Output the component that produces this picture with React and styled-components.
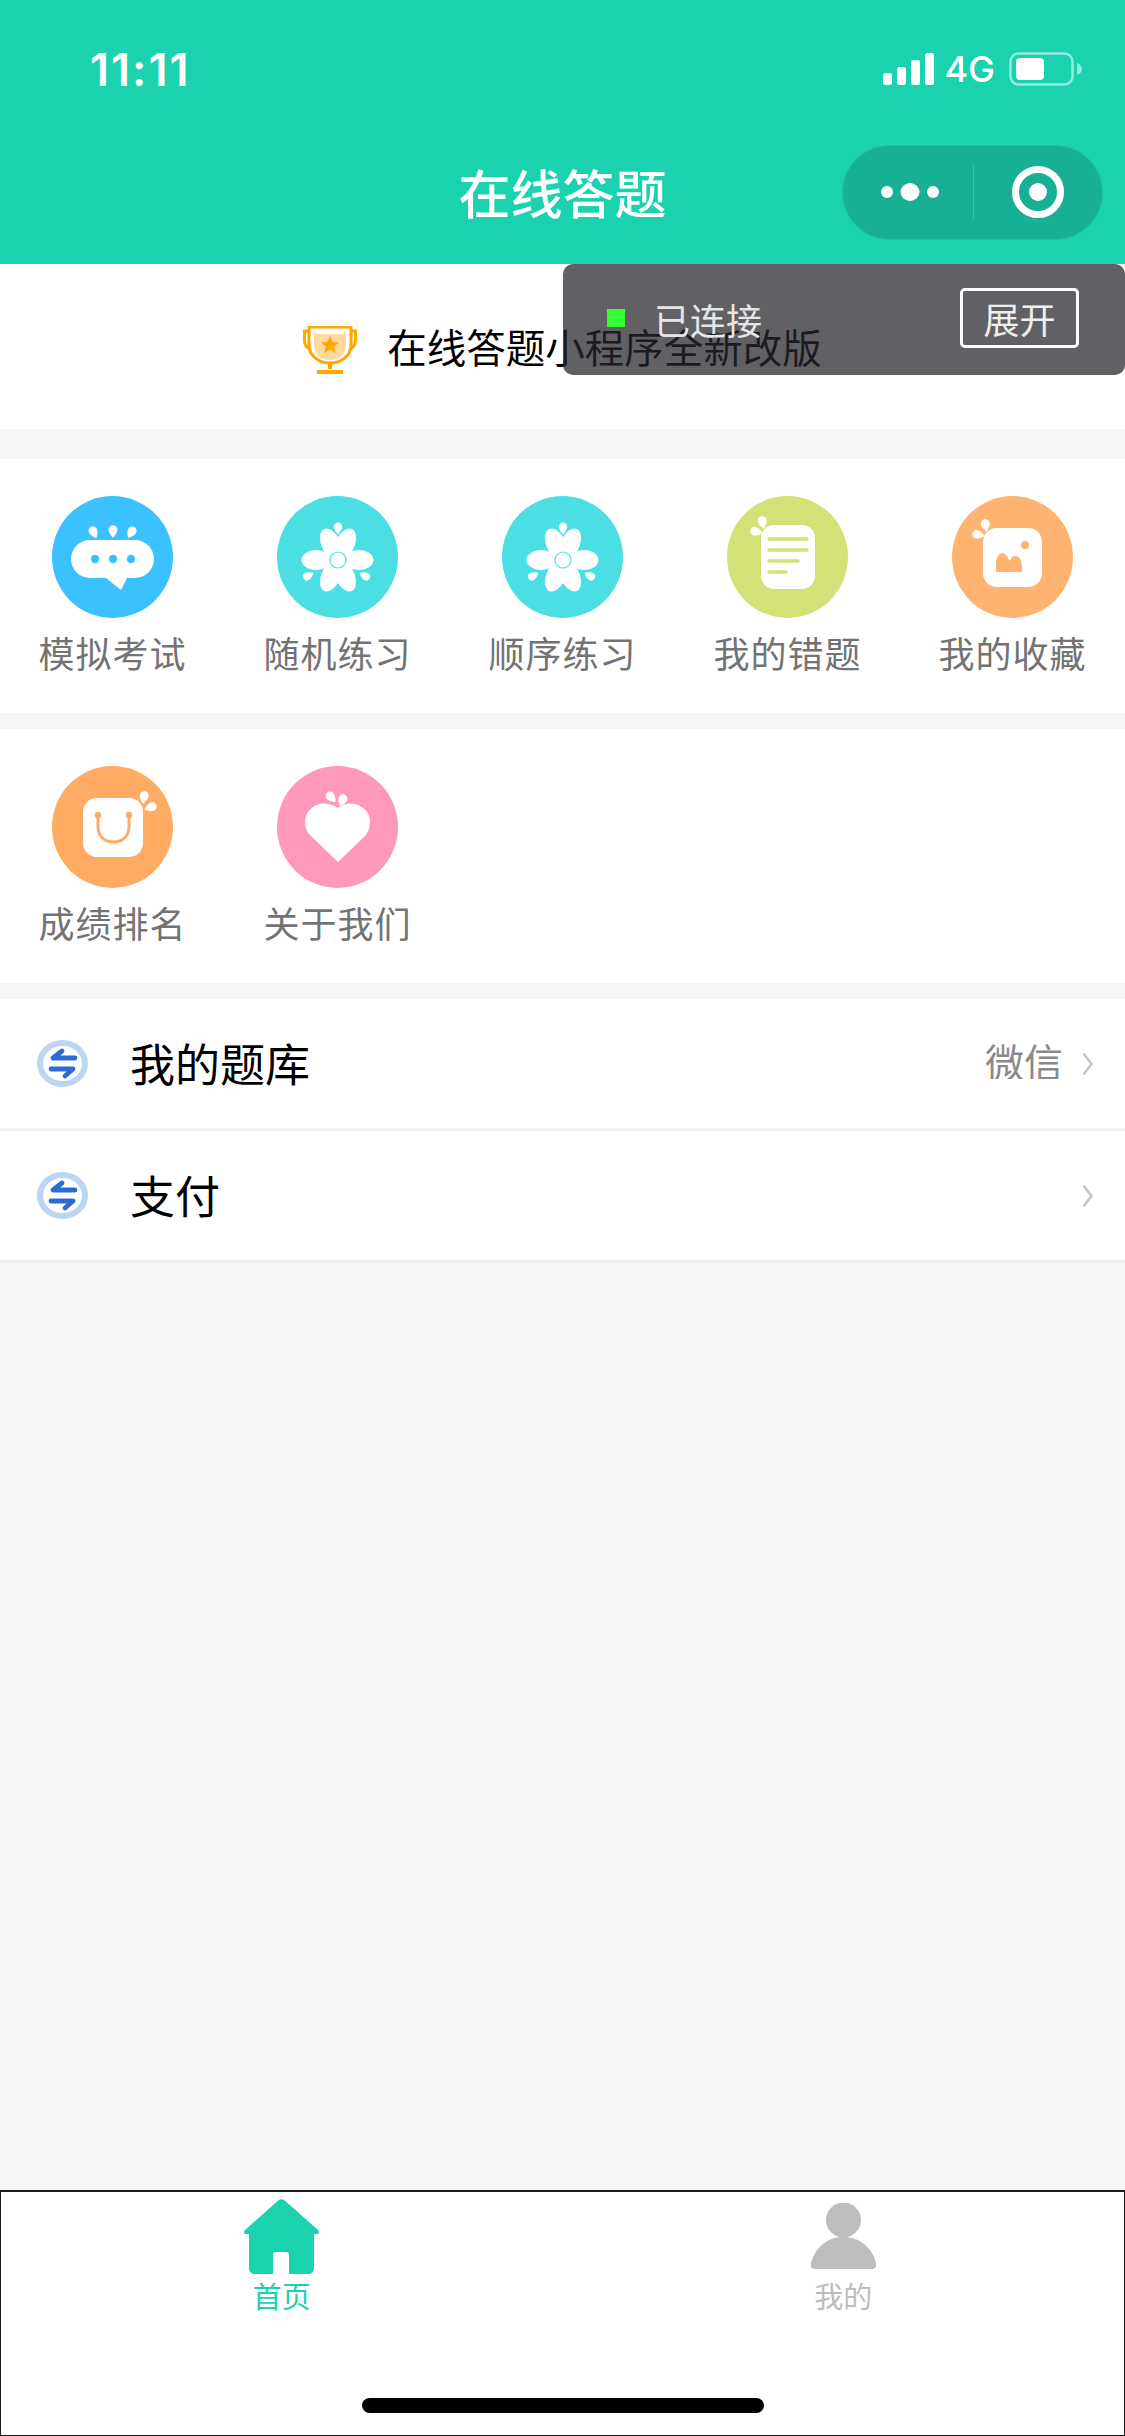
import styled, { createGlobalStyle } from "styled-components";

const GREEN = "#1ad2ad";

const GlobalStyle = createGlobalStyle`
  html, body {
    margin: 0;
    padding: 0;
    background: #f5f6f8;
    font-family: "Noto Sans CJK SC", "Noto Sans", sans-serif;
  }
  * { box-sizing: border-box; }
`;

const Page = styled.div`
  width: 1125px;
  height: 2436px;
  display: flex;
  flex-direction: column;
  background: #f5f6f8;
  overflow: hidden;
`;

const Header = styled.header`
  height: 264px;
  background: ${GREEN};
  color: #fff;
`;

const StatusBar = styled.div`
  height: 120px;
  padding: 18px 43px 0 90px;
  display: flex;
  align-items: center;
  justify-content: space-between;
`;

const Time = styled.span`
  font-family: Inter, sans-serif;
  font-size: 45px;
  font-weight: 600;
  letter-spacing: 2px;
  line-height: 1;
`;

const StatusRight = styled.div`
  display: flex;
  align-items: center;
  gap: 14px;
`;

const Carrier = styled.span`
  font-family: Inter, sans-serif;
  font-size: 36px;
  font-weight: 500;
  line-height: 1;
  margin-left: -4px;
`;

const NavBar = styled.div`
  height: 144px;
  padding: 0 22px;
  display: grid;
  grid-template-columns: 1fr auto 1fr;
  align-items: center;
`;

const Title = styled.h1`
  grid-column: 2;
  margin: 0;
  font-size: 52px;
  font-weight: 500;
  line-height: 1;
`;

const Capsule = styled.div`
  grid-column: 3;
  justify-self: end;
  width: 261px;
  height: 95px;
  border-radius: 48px;
  background: #17b093;
  border: 1px solid #25bd9f;
  display: flex;
  align-items: center;
`;

const CapsulePart = styled.div`
  flex: ${(p) => p.$flex};
  height: 56px;
  padding-left: ${(p) => p.$inset || 0}px;
  display: flex;
  align-items: center;
  justify-content: center;
  border-left: ${(p) => (p.$divided ? "1px solid #3cc0a6" : "none")};
`;

const Notice = styled.section`
  position: relative;
  height: 165px;
  margin-bottom: 30px;
  padding-top: 7px;
  background: #fff;
  display: flex;
  align-items: center;
  justify-content: center;
  gap: 30px;
`;

const NoticeText = styled.span`
  padding-bottom: 8px;
  font-size: 39.5px;
  line-height: 1;
  color: #000;
`;

const DebugPanel = styled.div`
  position: absolute;
  top: 0;
  right: 0;
  width: 562px;
  height: 111px;
  padding: 24px 46px 0 44px;
  border-radius: 10px;
  background: rgba(38, 38, 44, 0.73);
  display: flex;
  align-items: flex-start;
`;

const DebugState = styled.div`
  height: 60px;
  flex: 1;
  display: flex;
  align-items: center;
  gap: 29px;
`;

const GreenDot = styled.i`
  width: 18px;
  height: 18px;
  background: #33ff33;
`;

const DebugLabel = styled.span`
  padding-top: 2px;
  font-size: 36px;
  line-height: 1;
  color: #e6e6e6;
`;

const ExpandButton = styled.div`
  width: 119px;
  height: 60px;
  border: 3px solid #fff;
  border-radius: 5px;
  display: flex;
  align-items: center;
  justify-content: center;
  font-size: 36px;
  line-height: 1;
  color: #efefef;
`;

const EntryGrid = styled.section`
  height: 254px;
  margin-bottom: 16px;
  padding-top: 37px;
  background: #fff;
  display: grid;
  grid-template-columns: repeat(5, 225px);
  align-items: start;
`;

const Entry = styled.div`
  display: flex;
  flex-direction: column;
  align-items: center;
  gap: 16px;
`;

const EntryBadge = styled.div`
  width: 121px;
  height: 122px;
  border-radius: 50%;
  background: ${(p) => p.$color};
  svg { display: block; }
`;

const EntryLabel = styled.span`
  font-size: 36px;
  letter-spacing: 1px;
  line-height: 36px;
  color: #737373;
`;

const List = styled.section`
  background: #fff;
`;

const Row = styled.div`
  height: 132px;
  padding: 0 32px 0 37px;
  border-bottom: 3px solid #eeeff0;
  display: flex;
  align-items: center;
`;

const RowTitle = styled.span`
  flex: 1;
  margin-left: 42px;
  padding-bottom: 3px;
  font-size: 45px;
  line-height: 1;
  color: #000;
`;

const RowValue = styled.span`
  height: 37px;
  margin: 0 19px 6px 0;
  overflow: hidden;
  font-size: 39px;
  line-height: 37px;
  color: #8a8a8a;
`;

const TabBar = styled.nav`
  position: relative;
  height: 246px;
  margin-top: auto;
  padding-top: 7px;
  background: #fff;
  border: 1px solid #1a1a1a;
  border-top-width: 2px;
  display: flex;
  align-items: flex-start;
`;

const Tab = styled.div`
  flex: 1;
  height: 111px;
  display: flex;
  flex-direction: column;
  align-items: center;
  justify-content: space-between;
  color: ${(p) => (p.$active ? GREEN : "#bdbdbd")};
`;

const TabLabel = styled.span`
  font-size: 29px;
  line-height: 29px;
`;

const PersonSvg = styled.svg`
  margin-top: 4px;
`;

const HomeIndicator = styled.div`
  position: absolute;
  left: 361px;
  bottom: 22px;
  width: 402px;
  height: 15px;
  border-radius: 8px;
  background: #000;
`;

// tip points up at angle 0
const Drop = ({ x, y, a = 0, s = 1, fill = "#fff" }) => (
  <path
    d="M0 -7C2.6 -3.8 4.4 -1.4 4.4 1.4A4.4 4.4 0 0 1 -4.4 1.4C-4.4 -1.4 -2.6 -3.8 0 -7Z"
    fill={fill}
    transform={`translate(${x} ${y}) rotate(${a}) scale(${s})`}
  />
);

const BadgeSvg = ({ children }) => (
  <svg width="121" height="122" viewBox="0 0 121 122">{children}</svg>
);

const ChatIcon = () => (
  <BadgeSvg>
    <Drop x={41.5} y={36} a={155} />
    <Drop x={61} y={35} a={180} />
    <Drop x={79.5} y={36} a={-150} />
    <path d="M38 44H83A19 19 0 0 1 83 82H75L69 94L54 82H38A19 19 0 0 1 38 44Z" fill="#fff" />
    <circle cx="43" cy="63" r="4.2" fill="#3bc1ff" />
    <circle cx="61" cy="63" r="4.2" fill="#3bc1ff" />
    <circle cx="79" cy="63" r="4.2" fill="#3bc1ff" />
  </BadgeSvg>
);

const FlowerIcon = () => (
  <BadgeSvg>
    <g fill="#fff">
      <ellipse cx="39" cy="64" rx="14.5" ry="10" />
      <ellipse cx="82" cy="64" rx="14.5" ry="10" />
      <ellipse cx="61" cy="47" rx="9.5" ry="17" transform="rotate(-24 61 64)" />
      <ellipse cx="61" cy="47" rx="9.5" ry="17" transform="rotate(24 61 64)" />
      <ellipse cx="61" cy="81" rx="9.5" ry="17" transform="rotate(24 61 64)" />
      <ellipse cx="61" cy="81" rx="9.5" ry="17" transform="rotate(-24 61 64)" />
      <circle cx="61" cy="64" r="12" />
    </g>
    <circle cx="61" cy="64" r="8" fill="#fff" stroke="#4bdee2" strokeWidth="1.2" />
    <Drop x={61} y={32} a={180} s={0.95} />
    <Drop x={31} y={80} a={60} s={0.9} />
    <Drop x={88} y={80} a={-60} s={0.9} />
  </BadgeSvg>
);

const NoteIcon = () => (
  <BadgeSvg>
    <rect x="34" y="29" width="54" height="64" rx="13" fill="#fff" />
    <g stroke="#d3e176" strokeWidth="3.6" strokeLinecap="round">
      <path d="M42 43H80" />
      <path d="M42 54H80" />
      <path d="M42 65H71" />
      <path d="M42 76H59" />
    </g>
    <Drop x={35.5} y={26} a={170} />
    <Drop x={29} y={35.5} a={100} />
  </BadgeSvg>
);

const PhotoIcon = () => (
  <BadgeSvg>
    <rect x="31" y="32" width="59" height="59" rx="14" fill="#fff" />
    <circle cx="73" cy="49" r="4" fill="#ffb370" />
    <path
      d="M44 76V68C44 62 47 57 50 57C53 57 56 61 57.5 65C59 61.5 61 60 63 60C67 60 70 65 70 70V76Z"
      fill="#ffb370"
    />
    <Drop x={33.5} y={29} a={170} />
    <Drop x={26} y={38.5} a={100} />
  </BadgeSvg>
);

const BagIcon = () => (
  <BadgeSvg>
    <rect x="31" y="32" width="60" height="59" rx="14" fill="#fff" />
    <path d="M46 49V60C46 70 52 76 61.5 76C71 76 77 70 77 60V49" fill="none" stroke="#ffab63" strokeWidth="3" />
    <circle cx="46" cy="49" r="3.2" fill="#ffab63" />
    <circle cx="77" cy="49" r="3.2" fill="#ffab63" />
    <Drop x={92} y={31} a={-170} />
    <Drop x={99} y={41} a={-110} />
  </BadgeSvg>
);

const HeartIcon = () => (
  <BadgeSvg>
    <path
      d="M61 42C55 38 47 36 40 39C32 42 28 49 28 56C28 62 30 66 34 70L61 96L88 70C91 66 93 62 93 56C93 49 89 42 81 39C74 36 67 38 61 42Z"
      fill="#fff"
    />
    <Drop x={54} y={31} a={140} />
    <Drop x={65.5} y={34} a={-160} />
  </BadgeSvg>
);

const SwapIcon = () => (
  <svg width="51" height="47" viewBox="0 0 51 47">
    <ellipse cx="25.5" cy="23.5" rx="22.5" ry="20.5" fill="#fff" stroke="#bdd4f2" strokeWidth="6" />
    <g fill="none" stroke="#2b6bd6" strokeWidth="4.8" strokeLinecap="round" strokeLinejoin="round">
      <path d="M25 11L16 18H38" />
      <path d="M14 29H36L28 36" />
    </g>
  </svg>
);

const Chevron = () => (
  <svg width="11" height="24" viewBox="0 0 11 24">
    <path d="M1.5 1.5L9.5 12L1.5 22.5" fill="none" stroke="#c6c6c6" strokeWidth="2.6" />
  </svg>
);

const Trophy = () => (
  <svg width="54" height="48" viewBox="0 0 54 48">
    <path d="M11 6H43V19C43 28 36 34 27 34C18 34 11 28 11 19Z" fill="#ffd9a0" />
    <path d="M13 6H41V8H13Z" fill="#fff" />
    <path
      d="M6 1H48V19C48 30 38 37 27 37C16 37 6 30 6 19Z"
      fill="none"
      stroke="#ffa800"
      strokeWidth="3"
    />
    <path d="M6 5H1.5V15C1.5 19 4 22 8 24M48 5H52.5V15C52.5 19 50 22 46 24" fill="none" stroke="#ffa800" strokeWidth="3" />
    <path d="M27 37V43" stroke="#ffa800" strokeWidth="4" />
    <path d="M14 46H40" stroke="#ffa800" strokeWidth="4" />
    <path d="M27 10L29.6 16L36 16.5L31.2 20.6L32.7 27L27 23.6L21.3 27L22.8 20.6L18 16.5L24.4 16Z" fill="#ffa800" />
  </svg>
);

const SignalIcon = () => (
  <svg width="51" height="32" viewBox="0 0 51 32" fill="#fff">
    <rect x="0" y="20" width="9" height="12" rx="2.5" />
    <rect x="14" y="14" width="9" height="18" rx="2.5" />
    <rect x="28" y="7" width="9" height="25" rx="2.5" />
    <rect x="42" y="0" width="9" height="32" rx="2.5" />
  </svg>
);

const BatteryIcon = () => (
  <svg width="73" height="34" viewBox="0 0 73 34">
    <rect x="1.5" y="1.5" width="62" height="31" rx="8" fill="none" stroke="#fff" strokeOpacity="0.55" strokeWidth="2.5" />
    <rect x="7" y="6" width="28" height="22" rx="4" fill="#fff" />
    <path d="M68 11C71 12 73 14 73 17C73 20 71 22 68 23Z" fill="#fff" fillOpacity="0.55" />
  </svg>
);

const DotsIcon = () => (
  <svg width="58" height="20" viewBox="0 0 58 20" fill="#fff">
    <ellipse cx="6" cy="10" rx="6" ry="6" />
    <ellipse cx="29" cy="10" rx="9.5" ry="9" />
    <ellipse cx="52" cy="10" rx="6" ry="6" />
  </svg>
);

const TargetIcon = () => (
  <svg width="52" height="52" viewBox="0 0 52 52">
    <circle cx="26" cy="26" r="22.5" fill="none" stroke="#fff" strokeWidth="7" />
    <circle cx="26" cy="26" r="9" fill="#fff" />
  </svg>
);

const HomeIcon = () => (
  <svg width="75" height="75" viewBox="0 0 75 75" fill={GREEN}>
    <path d="M34.5 1.2C36 -.2 39 -.2 40.5 1.2L74 31C76 33 75 35 72 35H70V69C70 72.5 68 75 64 75H45V56C45 54 44 53 42 53H32C30 53 29 54 29 56V75H11C7 75 5 72.5 5 69V35H3C0 35 -1 33 1 31Z" />
  </svg>
);

const PersonIcon = () => (
  <PersonSvg width="65" height="66" viewBox="0 0 65 66" fill="#bdbdbd">
    <circle cx="32.5" cy="17" r="17.5" />
    <path d="M32.5 34C48 34 61 44 65 60C66 64 64 66 61 66H4C1 66 -1 64 0 60C4 44 17 34 32.5 34Z" />
  </PersonSvg>
);

const firstRow = [
  { label: "模拟考试", color: "#3bc1ff", Icon: ChatIcon },
  { label: "随机练习", color: "#4bdee2", Icon: FlowerIcon },
  { label: "顺序练习", color: "#4bdee2", Icon: FlowerIcon },
  { label: "我的错题", color: "#d3e176", Icon: NoteIcon },
  { label: "我的收藏", color: "#ffb370", Icon: PhotoIcon },
];

const secondRow = [
  { label: "成绩排名", color: "#ffab63", Icon: BagIcon },
  { label: "关于我们", color: "#ff99bb", Icon: HeartIcon },
];

const EntryRow = ({ items }) => (
  <EntryGrid>
    {items.map(({ label, color, Icon }) => (
      <Entry key={label}>
        <EntryBadge $color={color}>
          <Icon />
        </EntryBadge>
        <EntryLabel>{label}</EntryLabel>
      </Entry>
    ))}
  </EntryGrid>
);

export default function App() {
  return (
    <Page>
      <GlobalStyle />
      <Header>
        <StatusBar>
          <Time>11:11</Time>
          <StatusRight>
            <SignalIcon />
            <Carrier>4G</Carrier>
            <BatteryIcon />
          </StatusRight>
        </StatusBar>
        <NavBar>
          <Title>在线答题</Title>
          <Capsule>
            <CapsulePart $flex="0 0 130px" $inset={4}>
              <DotsIcon />
            </CapsulePart>
            <CapsulePart $flex="1" $divided>
              <TargetIcon />
            </CapsulePart>
          </Capsule>
        </NavBar>
      </Header>

      <Notice>
        <Trophy />
        <NoticeText>在线答题小程序全新改版</NoticeText>
        <DebugPanel>
          <DebugState>
            <GreenDot />
            <DebugLabel>已连接</DebugLabel>
          </DebugState>
          <ExpandButton>展开</ExpandButton>
        </DebugPanel>
      </Notice>

      <EntryRow items={firstRow} />
      <EntryRow items={secondRow} />

      <List>
        <Row>
          <SwapIcon />
          <RowTitle>我的题库</RowTitle>
          <RowValue>微信</RowValue>
          <Chevron />
        </Row>
        <Row>
          <SwapIcon />
          <RowTitle>支付</RowTitle>
          <Chevron />
        </Row>
      </List>

      <TabBar>
        <Tab $active>
          <HomeIcon />
          <TabLabel>首页</TabLabel>
        </Tab>
        <Tab>
          <PersonIcon />
          <TabLabel>我的</TabLabel>
        </Tab>
        <HomeIndicator />
      </TabBar>
    </Page>
  );
}
